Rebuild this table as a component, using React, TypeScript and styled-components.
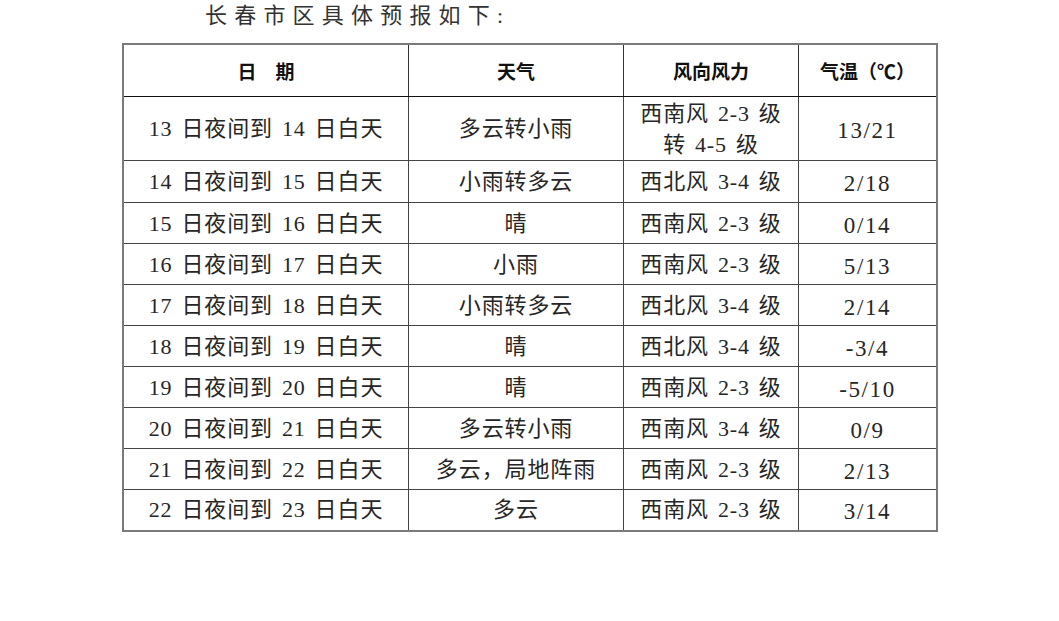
import React from "react";
import styled, { createGlobalStyle } from "styled-components";

const GlobalStyle = createGlobalStyle`
  html, body {
    margin: 0;
    padding: 0;
    background: #ffffff;
  }
  body {
    font-family: "Liberation Serif", "Noto Sans CJK SC", serif;
  }
`;

const Page = styled.div`
  width: 1059px;
  height: 621px;
  padding: 2px 0 0 122px;
  box-sizing: border-box;
  background: #ffffff;
`;

const Title = styled.div`
  padding-left: 83px;
  height: 41px;
  font-size: 22px;
  line-height: 28px;
  letter-spacing: 7.2px;
  color: #333;
`;

const Table = styled.table`
  border-collapse: collapse;
  table-layout: fixed;
  width: 815px;
  border: 2px solid #7a7a7a;
  color: #262626;
`;

const HeadCell = styled.th<{ $w: number }>`
  width: ${(p) => p.$w}px;
  height: 51px;
  padding: 0;
  font-size: 19px;
  font-weight: bold;
  color: #111;
  text-align: center;
  vertical-align: middle;
  border: 1px solid #333;
  border-bottom-color: #111;
`;

const Row = styled.tr<{ $h: number }>`
  height: ${(p) => p.$h}px;
`;

const Cell = styled.td<{ $num?: boolean }>`
  padding: 0;
  font-size: ${(p) => (p.$num ? "23px" : "22px")};
  line-height: 31px;
  letter-spacing: ${(p) => (p.$num ? "1.6px" : "0.9px")};
  word-spacing: 2.5px;
  text-align: center;
  vertical-align: middle;
  border: 1px solid #444;
  padding-top: ${(p) => (p.$num ? "4px" : "0")};
`;

type Forecast = {
  date: string;
  weather: string;
  wind: string[];
  temp: string;
};

const rows: Forecast[] = [
  { date: "13 日夜间到 14 日白天", weather: "多云转小雨", wind: ["西南风 2-3 级", "转 4-5 级"], temp: "13/21" },
  { date: "14 日夜间到 15 日白天", weather: "小雨转多云", wind: ["西北风 3-4 级"], temp: "2/18" },
  { date: "15 日夜间到 16 日白天", weather: "晴", wind: ["西南风 2-3 级"], temp: "0/14" },
  { date: "16 日夜间到 17 日白天", weather: "小雨", wind: ["西南风 2-3 级"], temp: "5/13" },
  { date: "17 日夜间到 18 日白天", weather: "小雨转多云", wind: ["西北风 3-4 级"], temp: "2/14" },
  { date: "18 日夜间到 19 日白天", weather: "晴", wind: ["西北风 3-4 级"], temp: "-3/4" },
  { date: "19 日夜间到 20 日白天", weather: "晴", wind: ["西南风 2-3 级"], temp: "-5/10" },
  { date: "20 日夜间到 21 日白天", weather: "多云转小雨", wind: ["西南风 3-4 级"], temp: "0/9" },
  { date: "21 日夜间到 22 日白天", weather: "多云，局地阵雨", wind: ["西南风 2-3 级"], temp: "2/13" },
  { date: "22 日夜间到 23 日白天", weather: "多云", wind: ["西南风 2-3 级"], temp: "3/14" },
];

const heights = [64, 42, 41, 41, 41, 41, 41, 41, 41, 41];

export default function App() {
  return (
    <>
      <GlobalStyle />
      <Page>
        <Title>长春市区具体预报如下:</Title>
        <Table>
          <thead>
            <tr>
              <HeadCell $w={284}>日　期</HeadCell>
              <HeadCell $w={214}>天气</HeadCell>
              <HeadCell $w={174}>风向风力</HeadCell>
              <HeadCell $w={137}>气温（℃）</HeadCell>
            </tr>
          </thead>
          <tbody>
            {rows.map((r, i) => (
              <Row key={r.date} $h={heights[i]}>
                <Cell>{r.date}</Cell>
                <Cell>{r.weather}</Cell>
                <Cell>
                  {r.wind.map((w) => (
                    <div key={w}>{w}</div>
                  ))}
                </Cell>
                <Cell $num>{r.temp}</Cell>
              </Row>
            ))}
          </tbody>
        </Table>
      </Page>
    </>
  );
}
